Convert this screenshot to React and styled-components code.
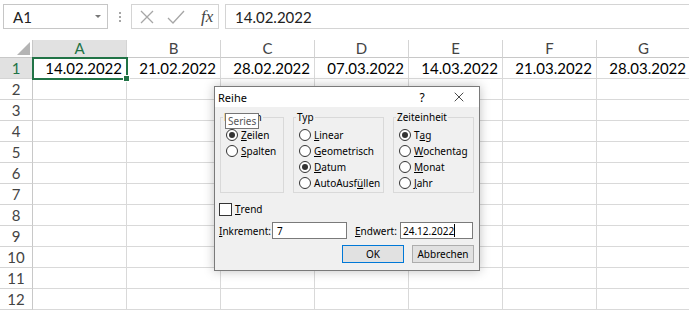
import React from 'react';
import styled, { createGlobalStyle } from 'styled-components';

const GlobalStyle = createGlobalStyle`
  html, body {
    margin: 0;
    padding: 0;
    background: #fff;
  }
  body {
    font-family: Lato, 'Liberation Sans', sans-serif;
    overflow: hidden;
  }
`;

const Page = styled.div`
  position: relative;
  width: 689px;
  height: 310px;
  overflow: hidden;
  background: #fff;
`;

/* formula bar */
const FormulaBar = styled.div`
  display: flex;
  align-items: flex-start;
  height: 40px;
  padding: 4px 0 0 3px;
  box-sizing: border-box;
`;
const NameBox = styled.div`
  width: 105px;
  height: 25px;
  box-sizing: border-box;
  border: 1px solid #c6c6c6;
  display: flex;
  align-items: center;
  justify-content: space-between;
  padding: 0 6px 0 9px;
  font-size: 15px;
  color: #222;
`;
const DropArrow = styled.span`
  width: 0;
  height: 0;
  border-left: 3px solid transparent;
  border-right: 3px solid transparent;
  border-top: 3px solid #777;
`;
const Grip = styled.div`
  width: 23px;
  height: 25px;
  display: flex;
  flex-direction: column;
  align-items: center;
  justify-content: center;
  gap: 2px;
  span {
    width: 2px;
    height: 2px;
    background: #a6a6a6;
  }
`;
const FxButtons = styled.div`
  width: 88px;
  height: 25px;
  box-sizing: border-box;
  border: 1px solid #d4d4d4;
  display: flex;
  align-items: center;
  padding-left: 8px;
  gap: 13px;
`;
const FxLabel = styled.span`
  font-family: 'Liberation Serif', serif;
  font-style: italic;
  font-size: 17px;
  color: #444;
  margin-left: 3px;
`;
const FormulaInput = styled.div`
  flex: 1;
  margin-left: 6px;
  height: 25px;
  box-sizing: border-box;
  border: 1px solid #d4d4d4;
  border-right: none;
  display: flex;
  align-items: center;
  padding-left: 9px;
  font-size: 15px;
  color: #222;
`;

/* sheet */
const Sheet = styled.div`
  display: grid;
  grid-template-columns: 33px repeat(7, 94px) 1fr;
  grid-template-rows: 18px repeat(12, 21px);
  font-size: 15px;
`;
const Corner = styled.div`
  background: #fff;
  border-right: 1px solid #c8c8c8;
  border-bottom: 1px solid #c8c8c8;
  display: flex;
  align-items: flex-end;
  justify-content: flex-end;
  padding: 0 2px 2px 0;
`;
const ColHead = styled.div`
  box-sizing: border-box;
  background: ${(p) => (p.selected ? '#e1e1e1' : '#fff')};
  color: ${(p) => (p.selected ? '#217346' : '#444')};
  border-right: 1px solid #d4d4d4;
  border-bottom: 1px solid ${(p) => (p.selected ? '#217346' : '#c8c8c8')};
  display: flex;
  align-items: center;
  justify-content: center;
  line-height: 1;
`;
const RowHead = styled.div`
  box-sizing: border-box;
  background: ${(p) => (p.selected ? '#e1e1e1' : '#fff')};
  color: ${(p) => (p.selected ? '#217346' : '#444')};
  border-right: 1px solid ${(p) => (p.selected ? '#217346' : '#c8c8c8')};
  border-bottom: 1px solid #d4d4d4;
  display: flex;
  align-items: center;
  justify-content: center;
`;
const Cell = styled.div`
  position: relative;
  box-sizing: border-box;
  border-right: 1px solid #d9d9d9;
  border-bottom: 1px solid #d9d9d9;
  text-align: right;
  padding-right: 4px;
  line-height: 21px;
  color: #000;
  white-space: nowrap;
  ${(p) =>
    p.active &&
    `
    outline: 2px solid #217346;
    outline-offset: -1px;
    z-index: 1;
    &::after {
      content: '';
      position: absolute;
      right: -4px;
      bottom: -4px;
      width: 5px;
      height: 5px;
      background: #217346;
      border: 1px solid #fff;
    }
  `}
`;

/* dialog */
const Dialog = styled.div`
  position: absolute;
  left: 214px;
  top: 86px;
  width: 266px;
  height: 185px;
  box-sizing: border-box;
  border: 1px solid #7a7a7a;
  background: #f0f0f0;
  box-shadow: 0 0 10px rgba(0, 0, 0, 0.25);
  display: flex;
  flex-direction: column;
  font-family: 'Noto Sans', 'Open Sans', sans-serif;
  font-size: 10px;
  color: #000;
  z-index: 5;
`;
const TitleBar = styled.div`
  height: 20px;
  background: #fff;
  display: flex;
  align-items: center;
  padding-left: 3px;
  font-size: 11px;
`;
const Title = styled.span`
  flex: 1;
`;
const TitleButton = styled.span`
  width: ${(p) => p.w}px;
  height: 20px;
  display: flex;
  align-items: center;
  justify-content: center;
  font-size: 12px;
`;
const Body = styled.div`
  flex: 1;
  padding: 3px 5px 0 5px;
  display: flex;
  flex-direction: column;
`;
const Groups = styled.div`
  display: flex;
  gap: 9px;
`;
const Group = styled.fieldset`
  margin: 0;
  padding: 3px 0 0 5px;
  width: ${(p) => p.w}px;
  height: 83px;
  min-width: 0;
  box-sizing: border-box;
  border: 1px solid #d9d9d9;
`;
const Legend = styled.legend`
  padding: 0 1px;
  margin-left: -3px;
  line-height: 14px;
`;
const Option = styled.div`
  height: 16px;
  display: flex;
  align-items: center;
  white-space: nowrap;
`;
const Radio = styled.span`
  width: 12px;
  height: 12px;
  box-sizing: border-box;
  border: 1px solid #333;
  border-radius: 50%;
  background: #fff;
  margin-right: 3px;
  display: flex;
  align-items: center;
  justify-content: center;
  &::after {
    content: '';
    width: 6px;
    height: 6px;
    border-radius: 50%;
    background: ${(p) => (p.checked ? '#333' : 'transparent')};
  }
`;
const CheckRow = styled.div`
  margin-top: 9px;
  height: 14px;
  display: flex;
  align-items: center;
`;
const CheckBox = styled.span`
  width: 13px;
  height: 13px;
  box-sizing: border-box;
  border: 1px solid #333;
  background: #fff;
  margin: 0 3px 0 -1px;
`;
const FieldRow = styled.div`
  margin-top: 6px;
  display: flex;
  align-items: center;
`;
const FieldLabel = styled.span`
  width: ${(p) => p.w}px;
  margin-left: ${(p) => p.ml || 0}px;
`;
const Input = styled.div`
  width: ${(p) => p.w}px;
  height: 17px;
  box-sizing: border-box;
  border: 1px solid #7a7a7a;
  background: #fff;
  padding-left: ${(p) => p.pl || 3}px;
  display: flex;
  align-items: center;
`;
const Caret = styled.span`
  width: 1px;
  height: 13px;
  background: #000;
`;
const Buttons = styled.div`
  margin-top: 6px;
  display: flex;
  justify-content: flex-end;
  gap: 8px;
`;
const Button = styled.div`
  width: 62px;
  height: 18px;
  box-sizing: border-box;
  border: 1px solid ${(p) => (p.primary ? '#0078d7' : '#adadad')};
  background: #e1e1e1;
  display: flex;
  align-items: center;
  justify-content: center;
`;
const Tooltip = styled.div`
  position: absolute;
  left: 10px;
  top: 26px;
  height: 16px;
  box-sizing: border-box;
  padding: 0 2px;
  border: 1px solid #767676;
  background: #fff;
  color: #575757;
  display: flex;
  align-items: center;
  z-index: 2;
`;

const columns = ['A', 'B', 'C', 'D', 'E', 'F', 'G'];
const dates = [
  '14.02.2022',
  '21.02.2022',
  '28.02.2022',
  '07.03.2022',
  '14.03.2022',
  '21.03.2022',
  '28.03.2022',
];

const CrossIcon = ({ size = 14, color = '#a6a6a6', width = 1.3 }) => (
  <svg width={size} height={size} viewBox="0 0 14 14">
    <path d="M1 1 L13 13 M13 1 L1 13" stroke={color} strokeWidth={width} fill="none" />
  </svg>
);
const CheckIcon = () => (
  <svg width="18" height="14" viewBox="0 0 18 14">
    <path d="M1 8 L6 13 L17 1" stroke="#a6a6a6" strokeWidth="1.3" fill="none" />
  </svg>
);

const RadioOption = ({ checked, children }) => (
  <Option>
    <Radio checked={checked} />
    {children}
  </Option>
);

const App = () => {
  const rows = Array.from({ length: 12 }, (_, i) => i + 1);
  return (
    <Page>
      <GlobalStyle />
      <FormulaBar>
        <NameBox>
          A1
          <DropArrow />
        </NameBox>
        <Grip>
          <span />
          <span />
          <span />
        </Grip>
        <FxButtons>
          <CrossIcon />
          <CheckIcon />
          <FxLabel>fx</FxLabel>
        </FxButtons>
        <FormulaInput>14.02.2022</FormulaInput>
      </FormulaBar>

      <Sheet>
        <Corner>
          <svg width="13" height="13" viewBox="0 0 13 13">
            <path d="M13 0 L13 13 L0 13 Z" fill="#b4b4b4" />
          </svg>
        </Corner>
        {columns.map((c) => (
          <ColHead key={c} selected={c === 'A'}>
            {c}
          </ColHead>
        ))}
        <ColHead />
        {rows.map((r) => (
          <React.Fragment key={r}>
            <RowHead selected={r === 1}>{r}</RowHead>
            {columns.map((c, i) => (
              <Cell key={c} active={r === 1 && i === 0}>
                {r === 1 ? dates[i] : ''}
              </Cell>
            ))}
            <Cell />
          </React.Fragment>
        ))}
      </Sheet>

      <Dialog>
        <TitleBar>
          <Title>Reihe</Title>
          <TitleButton w={34}>?</TitleButton>
          <TitleButton w={40}>
            <CrossIcon size={10} color="#000" width={1} />
          </TitleButton>
        </TitleBar>
        <Tooltip>Series</Tooltip>
        <Body>
          <Groups>
            <Group w={64}>
              <Legend>Reihe in</Legend>
              <RadioOption checked>
                <u>Z</u>eilen
              </RadioOption>
              <RadioOption>
                <u>S</u>palten
              </RadioOption>
            </Group>
            <Group w={91}>
              <Legend>Typ</Legend>
              <RadioOption>
                <u>L</u>inear
              </RadioOption>
              <RadioOption>
                <u>G</u>eometrisch
              </RadioOption>
              <RadioOption checked>
                <u>D</u>atum
              </RadioOption>
              <RadioOption>
                AutoAusf<u>ü</u>llen
              </RadioOption>
            </Group>
            <Group w={81}>
              <Legend>Zeiteinheit</Legend>
              <RadioOption checked>
                T<u>a</u>g
              </RadioOption>
              <RadioOption>
                <u>W</u>ochentag
              </RadioOption>
              <RadioOption>
                <u>M</u>onat
              </RadioOption>
              <RadioOption>
                <u>J</u>ahr
              </RadioOption>
            </Group>
          </Groups>
          <CheckRow>
            <CheckBox />
            <u>T</u>rend
          </CheckRow>
          <FieldRow>
            <FieldLabel w={53} ml={-1}>
              <u>I</u>nkrement:
            </FieldLabel>
            <Input w={75} pl={4}>
              7
            </Input>
            <FieldLabel w={45} ml={8}>
              <u>E</u>ndwert:
            </FieldLabel>
            <Input w={73} pl={2}>
              24.12.2022
              <Caret />
            </Input>
          </FieldRow>
          <Buttons>
            <Button primary>OK</Button>
            <Button>Abbrechen</Button>
          </Buttons>
        </Body>
      </Dialog>
    </Page>
  );
};

export default App;
